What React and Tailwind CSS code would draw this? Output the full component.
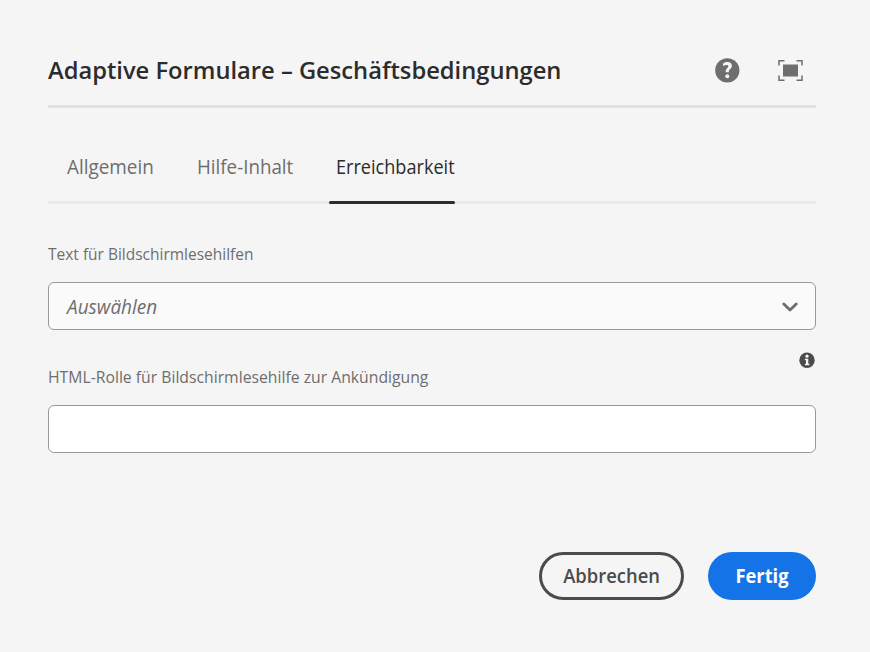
function HelpIcon() {
  return (
    <svg className="block size-[26px]" viewBox="0 0 26 26" aria-label="Hilfe">
      <circle cx="13.3" cy="13.4" r="12.1" fill="#6e6e6e" />
      <path d="M9.3 6.4C10.5 5.5 11.9 5 13.5 5C16.2 5 17.9 6.4 17.9 8.7C17.9 10.4 17 11.4 15.8 12.4C14.9 13.2 14.8 13.7 14.9 14.7V15.3H11.7V14.7C11.6 13.1 12 12.2 13.1 11.2C13.9 10.4 14.3 10 14.3 9.2C14.3 8.3 13.7 7.9 12.6 7.9C11.5 7.9 10.4 8.3 9.5 8.8C9.1 9 9 8.8 9 8.5V6.9C9 6.6 9.1 6.5 9.3 6.4Z" fill="#f5f5f5" />
      <circle cx="13.3" cy="19.2" r="2" fill="#f5f5f5" />
    </svg>
  );
}

function FullscreenIcon() {
  return (
    <svg className="block h-[22px] w-[26px]" viewBox="0 0 26 22" aria-label="Vollbild">
      <path d="M7.5 1.7H2V6.5M19.5 1.7H25V6.5M7.5 21.2H2V16.4M19.5 21.2H25V16.4" fill="none" stroke="#6e6e6e" strokeWidth="1.5" />
      <rect x="6" y="5.5" width="15" height="12" fill="#6e6e6e" />
    </svg>
  );
}

function InfoIcon() {
  return (
    <svg className="block size-4" viewBox="0 0 16 16" aria-label="Info">
      <circle cx="8" cy="8.3" r="7.7" fill="#4b4b4b" />
      <circle cx="8" cy="4.2" r="1.6" fill="#f5f5f5" />
      <path d="M5.9 6.7H9.3V11.8H10.4V13.3H5.9V11.8H7V8.2H5.9Z" fill="#f5f5f5" />
    </svg>
  );
}

export default function App() {
  return (
    <main className="h-[652px] w-[870px] bg-[#f5f5f5] pr-[54px] pl-12 font-['Open_Sans','Noto_Sans',sans-serif] whitespace-nowrap text-[#6e6e6e]">
      <header className="flex h-[108px] items-center justify-between border-b-3 border-[#e1e1e1] pt-[35px]">
        <h1 className="w-[513px] origin-left scale-x-[0.988] text-[24px] leading-[36px] font-semibold text-[#2c2c2c]">
          <span>Adaptive Formulare – Geschäftsbedingungen</span>
        </h1>
        <div className="flex items-center gap-[37px] pr-[13px]">
          <HelpIcon />
          <FullscreenIcon />
        </div>
      </header>

      <nav className="flex h-24 items-end border-b-3 border-[#eaeaea] text-[20px] leading-[30px]">
        <div className="-mb-[3px] h-[52px] w-[130px] pl-[19px]">
          <span className="inline-block origin-left scale-x-[0.945]">Allgemein</span>
        </div>
        <div className="-mb-[3px] h-[52px] w-[151px] pl-[19px]">
          <span className="inline-block origin-left scale-x-[0.938]">Hilfe-Inhalt</span>
        </div>
        <div className="relative -mb-[3px] h-[52px] w-[126px] pl-[7px] text-[#2c2c2c]">
          <span className="inline-block origin-left scale-x-[0.905]">Erreichbarkeit</span>
          <span className="absolute bottom-0 left-0 h-[3px] w-full rounded-full bg-[#2c2c2c]" />
        </div>
      </nav>

      <section className="pt-[38px]">
        <label className="block h-10 leading-6 text-[17px]">
          <span className="inline-block origin-left scale-x-[0.911]">Text für Bildschirmlesehilfen</span>
        </label>
        <div className="flex h-12 items-center justify-between rounded-[6px] border border-[#999999] bg-[#fafafa] pr-[17.5px] pl-[18px]">
          <span className="origin-left scale-x-[0.95] pt-0.5 text-[20px] italic">Auswählen</span>
          <svg className="mt-px block h-[10px] w-4" viewBox="0 0 16 10" aria-hidden="true">
            <path d="M1.8 2L8 8L14.2 2" fill="none" stroke="#6e6e6e" strokeWidth="2.8" strokeLinecap="round" strokeLinejoin="round" />
          </svg>
        </div>
      </section>

      <section className="pt-[22px]">
        <div className="flex h-[53px] justify-between pr-px">
          <label className="pt-[13px] leading-6 text-[17px]">
            <span className="inline-block origin-left scale-x-[0.926]">HTML-Rolle für Bildschirmlesehilfe zur Ankündigung</span>
          </label>
          <InfoIcon />
        </div>
        <input className="block h-12 w-full rounded-[6px] border border-[#999999] bg-white px-4 outline-none" aria-label="HTML-Rolle" />
      </section>

      <footer className="flex justify-end gap-6 pt-[99px] text-[20px] leading-7 font-semibold">
        <button className="flex h-12 w-[145px] items-center justify-center rounded-full border-3 border-[#4b4b4b] text-[#4b4b4b]">
          <span className="scale-x-[0.92]">Abbrechen</span>
        </button>
        <button className="flex h-12 w-[108px] items-center justify-center rounded-full bg-[#1473e6] font-bold text-white">
          <span className="scale-x-[0.915]">Fertig</span>
        </button>
      </footer>
    </main>
  );
}
